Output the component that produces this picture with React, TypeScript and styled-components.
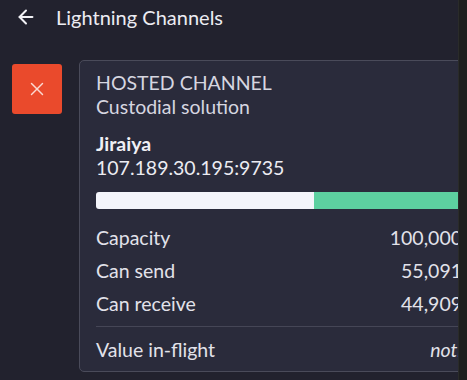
import React from "react";
import styled, { createGlobalStyle } from "styled-components";
import { ArrowLeft, X } from "lucide-react";

interface ChannelRow {
  label: string;
  value: string;
}

const rows: ChannelRow[] = [
  { label: "Capacity", value: "100,000 sat" },
  { label: "Can send", value: "55,091 sat" },
  { label: "Can receive", value: "44,909 sat" },
];

const capacity = 100000;
const canSend = 55091;

const App = () => {
  const sendShare = `${(canSend / capacity) * 100}%`;

  return (
    <Frame>
      <GlobalStyle />
      <Screen>
        <Header>
          <ArrowLeft size={22} strokeWidth={2.2} color="#f2f2f6" />
          <Title>Lightning Channels</Title>
        </Header>
        <Content>
          <CloseButton>
            <X size={22} strokeWidth={1.6} color="#fbd9d2" />
          </CloseButton>
          <Card>
            <Kind>HOSTED CHANNEL</Kind>
            <Kind>Custodial solution</Kind>
            <PeerName>Jiraiya</PeerName>
            <PeerAddress>107.189.30.195:9735</PeerAddress>
            <Bar>
              <BarPart $color="#f4f5fb" style={{ width: sendShare }} />
              <BarPart $color="#5dd0a0" />
            </Bar>
            {rows.map((row) => (
              <Row key={row.label}>
                <Label>{row.label}</Label>
                <Value>{row.value}</Value>
              </Row>
            ))}
            <Divider />
            <Row>
              <Label>Value in-flight</Label>
              <Value $italic>nothing</Value>
            </Row>
          </Card>
        </Content>
      </Screen>
      <ScrollStrip />
    </Frame>
  );
};

export default App;

const GlobalStyle = createGlobalStyle`
  body {
    margin: 0;
    background-color: #22222e;
    font-family: Lato, "Noto Sans", sans-serif;
  }
`;

const Frame = styled.div`
  display: flex;
  width: 467px;
  height: 380px;
  background-color: #22222e;
`;

const Screen = styled.div`
  display: flex;
  flex-direction: column;
  width: 459px;
  overflow: hidden;
`;

const ScrollStrip = styled.div`
  width: 8px;
  background-color: #1e1f1e;
  border-left: 1px solid #2a2b2a;
`;

const Header = styled.div`
  display: flex;
  align-items: center;
  gap: 19px;

  height: 33px;
  padding-left: 15px;
  flex-shrink: 0;
`;

const Title = styled.span`
  font-size: 20px;
  color: #ececf2;
`;

const Content = styled.div`
  display: flex;
  align-items: flex-start;
  gap: 17px;

  padding: 27px 0 0 12px;
`;

const CloseButton = styled.div`
  display: flex;
  align-items: center;
  justify-content: center;
  flex-shrink: 0;

  width: 50px;
  height: 50px;
  margin-top: 4px;

  background-color: #ea4a2c;
  border-radius: 3px;
`;

const Card = styled.div`
  display: flex;
  flex-direction: column;
  flex-shrink: 0;
  box-sizing: border-box;

  width: 430px;
  padding: 10px 16px 5px;

  background-color: #2a2b3b;
  border: 1px solid #4a4b5a;
  border-radius: 5px;
`;

const Kind = styled.div`
  font-size: 19.5px;
  line-height: 24px;
  color: #d6d6e0;
`;

const PeerName = styled.div`
  margin-top: 13px;

  font-size: 19.5px;
  font-weight: 700;
  line-height: 24px;
  color: #f0f0f5;
`;

const PeerAddress = styled.div`
  font-size: 19.5px;
  line-height: 24px;
  color: #ececf2;
`;

const Bar = styled.div`
  display: flex;

  height: 17px;
  margin-top: 12px;
  margin-bottom: 12px;

  border-radius: 3px;
  overflow: hidden;
`;

const BarPart = styled.div<{ $color: string }>`
  flex-grow: 1;
  flex-shrink: 0;
  background-color: ${(p) => p.$color};

  &:first-child {
    flex-grow: 0;
  }
`;

const Row = styled.div`
  display: flex;
  align-items: center;
  justify-content: space-between;

  height: 33px;
`;

const Label = styled.span`
  font-size: 19.5px;
  color: #e2e2ea;
`;

const Value = styled.span<{ $italic?: boolean }>`
  font-size: 19.5px;
  font-style: ${(p) => (p.$italic ? "italic" : "normal")};
  color: #e2e2ea;
`;

const Divider = styled.div`
  height: 1px;
  margin: 6px 0;
  background-color: #454656;
`;
